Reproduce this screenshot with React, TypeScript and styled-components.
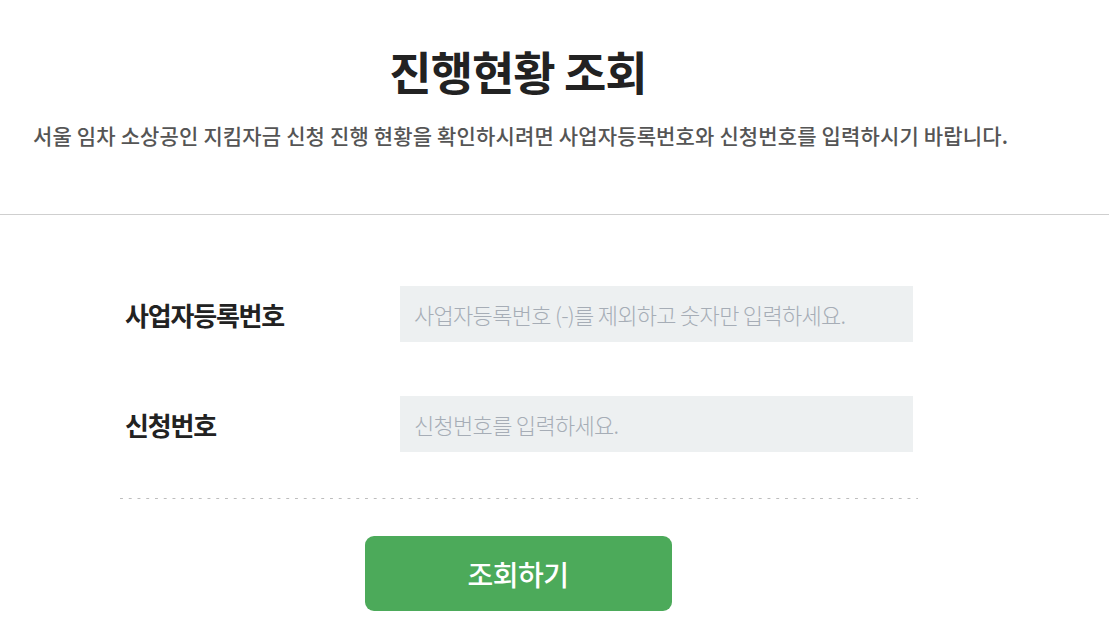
import React from 'react'
import styled, { createGlobalStyle } from 'styled-components'

const GlobalStyle = createGlobalStyle`
  html, body {
    margin: 0;
    padding: 0;
    background: #fff;
  }
  body {
    font-family: 'Noto Sans CJK KR', 'Noto Sans', sans-serif;
    color: #222;
  }
`

export default function App(): JSX.Element {
  const fields = [
    { label: '사업자등록번호', placeholder: '사업자등록번호 (-)를 제외하고 숫자만 입력하세요.' },
    { label: '신청번호', placeholder: '신청번호를 입력하세요.' },
  ]

  return (
    <>
      <GlobalStyle />
      <Header>
        <Inner>
          <Title>진행현황 조회</Title>
          <Description>
            서울 임차 소상공인 지킴자금 신청 진행 현황을 확인하시려면 사업자등록번호와 신청번호를 입력하시기 바랍니다.
          </Description>
        </Inner>
      </Header>
      <Inner>
        <Form onSubmit={e => e.preventDefault()}>
          <Fields>
            {fields.map(field => (
              <FieldRow key={field.label}>
                <Label>{field.label}</Label>
                <Input type='text' placeholder={field.placeholder} />
              </FieldRow>
            ))}
          </Fields>
          <Actions>
            <SubmitButton type='submit'>조회하기</SubmitButton>
          </Actions>
        </Form>
      </Inner>
    </>
  )
}

const Inner = styled.div`
  width: 1036px;
`

const Header = styled.header`
  padding: 38px 0 64px;
  border-bottom: 1px solid #cfcfcf;
`

const Title = styled.h1`
  margin: 0;
  text-align: center;
  font-size: 46px;
  font-weight: 700;
  line-height: 64px;
  letter-spacing: -1px;
  color: #222;
`

const Description = styled.p`
  margin: 18px 0 0 33px;
  font-size: 21px;
  font-weight: 500;
  line-height: 30px;
  letter-spacing: 0.15px;
  color: #555;
  white-space: nowrap;
`

const Form = styled.form`
  padding: 71px 0 0;
`

// dashed divider drawn as a repeating gradient (3px dash, ~9px period)
const Fields = styled.div`
  width: 800px;
  margin: 0 auto;
  padding-bottom: 47px;
  background-image: linear-gradient(to right, #bdbdbd 0, #bdbdbd 3px, transparent 3px);
  background-size: 8.75px 1px;
  background-repeat: repeat-x;
  background-position: 2px bottom;
  display: flex;
  flex-direction: column;
  gap: 54px;
`

const FieldRow = styled.div`
  display: flex;
  align-items: center;
  padding-left: 7px;
`

const Label = styled.label`
  width: 275px;
  font-size: 26px;
  font-weight: 700;
  letter-spacing: -1.2px;
  color: #222;
`

const Input = styled.input`
  width: 513px;
  height: 56px;
  box-sizing: border-box;
  border: none;
  background: #edf0f1;
  padding: 0 14px;
  font-family: 'Noto Sans CJK KR', 'Noto Sans', sans-serif;
  font-size: 22px;
  font-weight: 300;
  letter-spacing: -0.7px;
  color: #333;
  outline: none;

  &::placeholder {
    color: #a6adb6;
  }
`

const Actions = styled.div`
  display: flex;
  justify-content: center;
  padding: 37px 0 30px;
`

const SubmitButton = styled.button`
  width: 307px;
  height: 75px;
  border: none;
  border-radius: 9px;
  background: #4caa5a;
  color: #fff;
  font-family: 'Noto Sans CJK KR', 'Noto Sans', sans-serif;
  font-size: 28px;
  font-weight: 500;
  letter-spacing: -0.5px;
  cursor: pointer;
`
